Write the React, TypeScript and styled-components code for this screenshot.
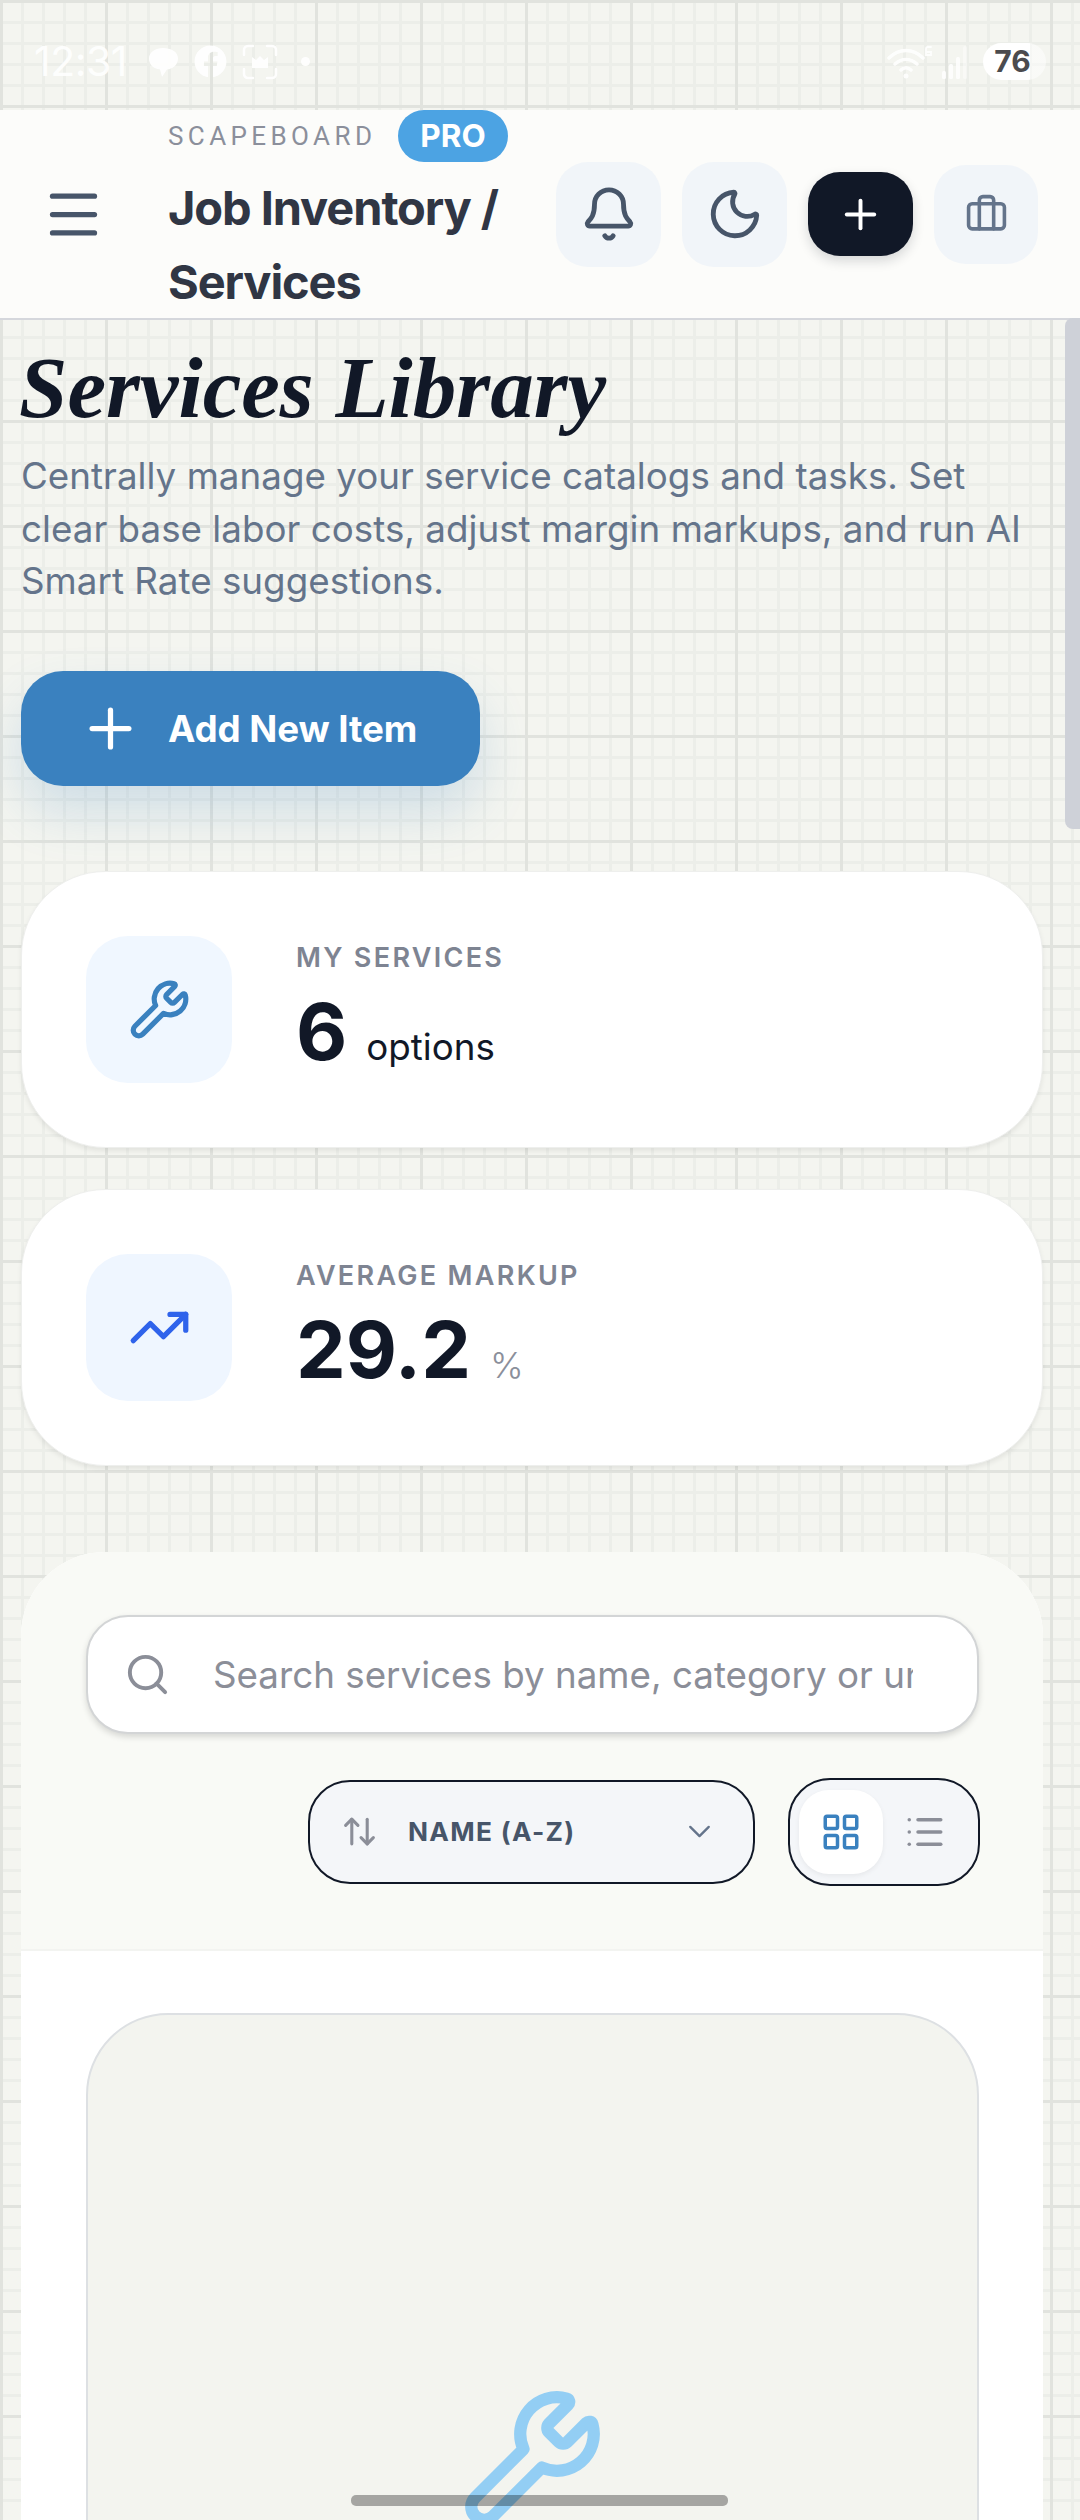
import React from "react";
import styled, { createGlobalStyle } from "styled-components";
import {
  ArrowUpDown,
  Bell,
  Briefcase,
  ChevronDown,
  LayoutGrid,
  List,
  Menu,
  Moon,
  Plus,
  Search,
  TrendingUp,
  Wrench,
} from "lucide-react";
import { FaFacebook } from "react-icons/fa";

const GlobalStyle = createGlobalStyle`
  * {
    box-sizing: border-box;
  }
  html, body {
    margin: 0;
    padding: 0;
    background: #f4f5f0;
  }
  body {
    font-family: Inter, "Liberation Sans", sans-serif;
  }
`;

const Page = styled.div`
  position: relative;
  width: 1080px;
  height: 2520px;
  overflow: hidden;
  background-color: #f4f5f0;
  background-image: linear-gradient(#e1e3de 2.6px, transparent 2.6px),
    linear-gradient(90deg, #e1e3de 2.6px, transparent 2.6px),
    linear-gradient(#eceee9 2.6px, transparent 2.6px),
    linear-gradient(90deg, #eceee9 2.6px, transparent 2.6px);
  background-size: 105px 105px, 105px 105px, 21px 21px, 21px 21px;
`;

const StatusBar = styled.div`
  height: 110px;
  padding: 43px 34px 0 34px;
  display: flex;
  align-items: flex-start;
  color: #fff;
`;

const Time = styled.span`
  font-size: 41px;
  line-height: 37px;
  letter-spacing: -0.5px;
  opacity: 0.9;
  margin-right: 21px;
`;

const StatusIcons = styled.div`
  display: flex;
  align-items: center;
  height: 37px;
  gap: 15px;
  opacity: 0.95;
`;

const StatusDot = styled.span`
  width: 9px;
  height: 9px;
  margin-left: 8px;
  border-radius: 50%;
  background: #fff;
`;

const StatusRight = styled.div`
  margin-left: auto;
  display: flex;
  align-items: center;
  height: 37px;
  gap: 9px;
`;

const Battery = styled.span`
  width: 63px;
  height: 37px;
  margin-left: 2px;
  border-radius: 19px;
  background: linear-gradient(90deg, #fff 75%, rgba(255, 255, 255, 0.5) 75%);
  color: #4b4b4e;
  font-size: 30px;
  font-weight: 700;
  line-height: 37px;
  text-align: center;
  padding-right: 4px;
`;

const Header = styled.header`
  height: 210px;
  background: #fcfcfa;
  border-bottom: 2px solid #d5d7dc;
  display: flex;
  align-items: center;
  padding: 0 42px;
`;

const MenuButton = styled.div`
  display: flex;
  color: #475569;
  margin-right: 63px;
`;

const TitleBlock = styled.div`
  width: 388px;
  align-self: flex-start;
`;

const BrandRow = styled.div`
  display: flex;
  align-items: center;
  height: 52px;
  margin-bottom: 9px;
`;

const Brand = styled.span`
  width: 230px;
  color: #8b8f9b;
  font-family: Roboto, sans-serif;
  font-size: 26px;
  font-weight: 400;
  letter-spacing: 4.4px;
  white-space: nowrap;
`;

const ProBadge = styled.span`
  width: 110px;
  height: 52px;
  border-radius: 26px;
  background: #4ca3e3;
  color: #fff;
  font-size: 31.5px;
  font-weight: 700;
  line-height: 52px;
  text-align: center;
`;

const PageTitle = styled.h1`
  margin: 0;
  max-width: 360px;
  color: #303644;
  font-size: 47px;
  font-weight: 700;
  line-height: 74px;
  letter-spacing: -1.1px;
`;

const HeaderActions = styled.div`
  margin-left: auto;
  display: flex;
  align-items: center;
  gap: 21px;
`;

const HeaderButton = styled.div<{ $w: number; $h: number; $dark?: boolean; $muted?: boolean }>`
  width: ${(p) => p.$w}px;
  height: ${(p) => p.$h}px;
  border-radius: 32px;
  display: flex;
  align-items: center;
  justify-content: center;
  background: ${(p) => (p.$dark ? "#111827" : "#f1f5f9")};
  color: ${(p) => (p.$dark ? "#fff" : p.$muted ? "#64748b" : "#475569")};
  box-shadow: ${(p) => (p.$dark ? "0 5px 12px rgba(17, 24, 39, 0.16)" : "none")};
`;

const Content = styled.main`
  padding: 0 37px 0 21px;
`;

const HeroTitle = styled.h2`
  margin: 22px 0 0 -2px;
  color: #111827;
  font-family: "Liberation Serif", serif;
  font-size: 87px;
  font-style: italic;
  font-weight: 700;
  line-height: 92px;
`;

const HeroText = styled.p`
  margin: 16px 0 0 0;
  color: #64748b;
  font-size: 36.75px;
  line-height: 52.5px;
  letter-spacing: 0.02px;
  width: 1010px;
`;

const AddButton = styled.div`
  margin-top: 63px;
  width: 459px;
  height: 115px;
  border-radius: 42px;
  background: #3a81bf;
  color: #fff;
  display: flex;
  align-items: center;
  gap: 26px;
  padding-left: 58px;
  font-size: 36.75px;
  font-weight: 700;
  letter-spacing: -0.1px;
  box-shadow: 0 26px 52px rgba(58, 129, 191, 0.2);
`;

const StatCard = styled.section<{ $top: number }>`
  margin-top: ${(p) => p.$top}px;
  width: 1022px;
  height: 277px;
  border-radius: 84px;
  background: #fff;
  border: 1px solid #eeefed;
  box-shadow: 0 3px 5px rgba(0, 0, 0, 0.07);
  display: flex;
  align-items: center;
  padding-left: 64px;
`;

const StatIcon = styled.div<{ $color: string; $bg: string }>`
  width: 146px;
  height: 147px;
  border-radius: 42px;
  margin-right: 64px;
  display: flex;
  align-items: center;
  justify-content: center;
  background: ${(p) => p.$bg};
  color: ${(p) => p.$color};
`;

const StatLabel = styled.div`
  color: #7e8492;
  font-size: 27px;
  font-weight: 600;
  letter-spacing: 2.3px;
  line-height: 32px;
`;

const StatRow = styled.div`
  margin-top: 12px;
  display: flex;
  align-items: baseline;
`;

const StatValue = styled.span`
  color: #111827;
  font-size: 79px;
  font-weight: 700;
  line-height: 90px;
  margin-right: 19px;
`;

const StatUnit = styled.span<{ $muted?: boolean }>`
  color: ${(p) => (p.$muted ? "#8b8f9b" : "#111827")};
  font-size: ${(p) => (p.$muted ? 36 : 36.75)}px;
  font-weight: ${(p) => (p.$muted ? 300 : 400)};
`;

const Panel = styled.section`
  margin-top: 86px;
  width: 1022px;
  border-radius: 84px 84px 0 0;
  overflow: hidden;
  background: #fff;
`;

const Filters = styled.div`
  background: #f9faf6;
  padding: 63px 64px 63px 65px;
`;

const SearchBox = styled.div`
  height: 119px;
  border: 2.6px solid #d3d5d6;
  border-radius: 42px;
  background: #fff;
  box-shadow: 0 3px 6px rgba(0, 0, 0, 0.14);
  display: flex;
  align-items: center;
  gap: 42px;
  padding: 0 64px 0 36px;
  color: #8b8e98;
`;

const SearchInput = styled.input`
  flex: 1;
  min-width: 0;
  border: 0;
  outline: 0;
  padding: 0;
  background: transparent;
  font-family: inherit;
  font-size: 36.75px;
  &::placeholder {
    color: #8b8e98;
    opacity: 1;
  }
`;

const Toolbar = styled.div`
  margin-top: 44px;
  margin-right: -1px;
  display: flex;
  align-items: center;
  justify-content: flex-end;
  gap: 33px;
`;

const SortSelect = styled.div`
  width: 447px;
  height: 104px;
  border: 2.6px solid #111827;
  border-radius: 42px;
  background: #f4f6f9;
  display: flex;
  align-items: center;
  padding: 0 35px 0 31px;
  color: #8b8e98;
`;

const SortLabel = styled.span`
  margin-left: 30px;
  flex: 1;
  color: #475569;
  font-size: 26.25px;
  font-weight: 700;
  letter-spacing: 1.3px;
`;

const Chevron = styled.span`
  display: flex;
  color: #64748b;
`;

const ViewToggle = styled.div`
  width: 192px;
  height: 108px;
  border: 2.6px solid #111827;
  border-radius: 42px;
  background: #f4f6f9;
  display: flex;
  align-items: center;
  padding: 0 9px;
`;

const ViewOption = styled.div<{ $active?: boolean }>`
  width: 84px;
  height: 84px;
  border-radius: 30px;
  display: flex;
  align-items: center;
  justify-content: center;
  background: ${(p) => (p.$active ? "#fff" : "transparent")};
  color: ${(p) => (p.$active ? "#3a81bf" : "#8b8e98")};
  box-shadow: ${(p) => (p.$active ? "0 2px 5px rgba(0, 0, 0, 0.06)" : "none")};
`;

const Results = styled.div`
  border-top: 2px solid #f3f4f1;
  padding: 62px 64px 0 65px;
`;

const ServiceCard = styled.article`
  height: 760px;
  border: 2px solid #dde0e3;
  border-radius: 82px;
  background: #f3f4ef;
  padding-top: 370px;
  display: flex;
  justify-content: center;
  color: #45b0f9;
`;

const FadedIcon = styled.span`
  display: flex;
  opacity: 0.55;
`;

const Scrollbar = styled.div`
  position: absolute;
  top: 318px;
  right: 0;
  width: 15px;
  height: 511px;
  border-radius: 8px 0 0 8px;
  background: #ced1d8;
`;

const HomeIndicator = styled.div`
  position: absolute;
  top: 2495px;
  left: 351px;
  width: 377px;
  height: 11px;
  border-radius: 5px;
  background: rgba(0, 0, 0, 0.32);
`;

const MessageIcon = () => (
  <svg width="31" height="33" viewBox="0 0 31 33" fill="#fff">
    <path d="M15 3c8 0 15 3.500 15 10.500S24 24 19 24.500L14 32l-2-7.500C5 23.500 1 19.500 1 13.500S7 3 15 3z" />
  </svg>
);

const ScreenshotIcon = () => (
  <svg width="36" height="36" viewBox="0 0 36 36" fill="none" stroke="#fff" strokeWidth="2.600" strokeLinecap="round">
    <path d="M2 11V6a4 4 0 0 1 4-4h5M25 2h5a4 4 0 0 1 4 4v5M34 25v5a4 4 0 0 1-4 4h-5M11 34H6a4 4 0 0 1-4-4v-5" />
    <path d="M10 13l4 3 4-4 4 4 4-3v11H10z" fill="#fff" stroke="none" />
  </svg>
);

const WifiIcon = () => (
  <svg width="46" height="36" viewBox="0 0 46 36" fill="none" stroke="#fff" strokeWidth="3.500" strokeLinecap="round" opacity="0.9">
    <path d="M2 14c10-10 24-10 34 0M8 20c7-6 15-6 22 0M14 26c3-3 7-3 10 0" />
    <circle cx="19" cy="32" r="2.500" fill="#fff" stroke="none" />
    <path d="M44 3h-3a2 2 0 0 0-2 2v6h5V8h-5" strokeWidth="1.800" />
  </svg>
);

const SignalIcon = () => (
  <svg width="30" height="34" viewBox="0 0 30 34" fill="#fff" opacity="0.85">
    <rect x="0" y="26" width="4" height="8" rx="1.500" />
    <rect x="7" y="19" width="4" height="15" rx="1.500" />
    <rect x="14" y="12" width="4" height="22" rx="1.500" />
    <rect x="21" y="1" width="4" height="33" rx="1.500" opacity="0.5" />
  </svg>
);

export default function App() {
  return (
    <Page>
      <GlobalStyle />
      <StatusBar>
        <Time>12:31</Time>
        <StatusIcons>
          <MessageIcon />
          <FaFacebook size={33} color="#fff" />
          <ScreenshotIcon />
          <StatusDot />
        </StatusIcons>
        <StatusRight>
          <WifiIcon />
          <SignalIcon />
          <Battery>76</Battery>
        </StatusRight>
      </StatusBar>

      <Header>
        <MenuButton>
          <Menu size={63} />
        </MenuButton>
        <TitleBlock>
          <BrandRow>
            <Brand>SCAPEBOARD</Brand>
            <ProBadge>PRO</ProBadge>
          </BrandRow>
          <PageTitle>Job Inventory / Services</PageTitle>
        </TitleBlock>
        <HeaderActions>
          <HeaderButton $w={105} $h={105}>
            <Bell size={58} />
          </HeaderButton>
          <HeaderButton $w={105} $h={105}>
            <Moon size={58} />
          </HeaderButton>
          <HeaderButton $w={105} $h={84} $dark>
            <Plus size={47} />
          </HeaderButton>
          <HeaderButton $w={104} $h={99} $muted>
            <Briefcase size={43} />
          </HeaderButton>
        </HeaderActions>
      </Header>

      <Content>
        <HeroTitle>Services Library</HeroTitle>
        <HeroText>
          Centrally manage your service catalogs and tasks. Set clear base labor costs, adjust margin
          markups, and run AI Smart Rate suggestions.
        </HeroText>
        <AddButton>
          <Plus size={63} />
          Add New Item
        </AddButton>

        <StatCard $top={85}>
          <StatIcon $color="#3a81bf" $bg="#f0f7ff">
            <Wrench size={63} />
          </StatIcon>
          <div>
            <StatLabel>MY SERVICES</StatLabel>
            <StatRow>
              <StatValue>6</StatValue>
              <StatUnit>options</StatUnit>
            </StatRow>
          </div>
        </StatCard>

        <StatCard $top={41}>
          <StatIcon $color="#2f63eb" $bg="#eff6ff">
            <TrendingUp size={63} />
          </StatIcon>
          <div>
            <StatLabel>AVERAGE MARKUP</StatLabel>
            <StatRow>
              <StatValue>29.2</StatValue>
              <StatUnit $muted>%</StatUnit>
            </StatRow>
          </div>
        </StatCard>

        <Panel>
          <Filters>
            <SearchBox>
              <Search size={47} />
              <SearchInput placeholder="Search services by name, category or unit..." readOnly />
            </SearchBox>
            <Toolbar>
              <SortSelect>
                <ArrowUpDown size={37} />
                <SortLabel>NAME (A-Z)</SortLabel>
                <Chevron>
                  <ChevronDown size={37} strokeWidth={1.5} />
                </Chevron>
              </SortSelect>
              <ViewToggle>
                <ViewOption $active>
                  <LayoutGrid size={42} />
                </ViewOption>
                <ViewOption>
                  <List size={42} />
                </ViewOption>
              </ViewToggle>
            </Toolbar>
          </Filters>
          <Results>
            <ServiceCard>
              <FadedIcon>
                <Wrench size={147} />
              </FadedIcon>
            </ServiceCard>
          </Results>
        </Panel>
      </Content>

      <Scrollbar />
      <HomeIndicator />
    </Page>
  );
}
